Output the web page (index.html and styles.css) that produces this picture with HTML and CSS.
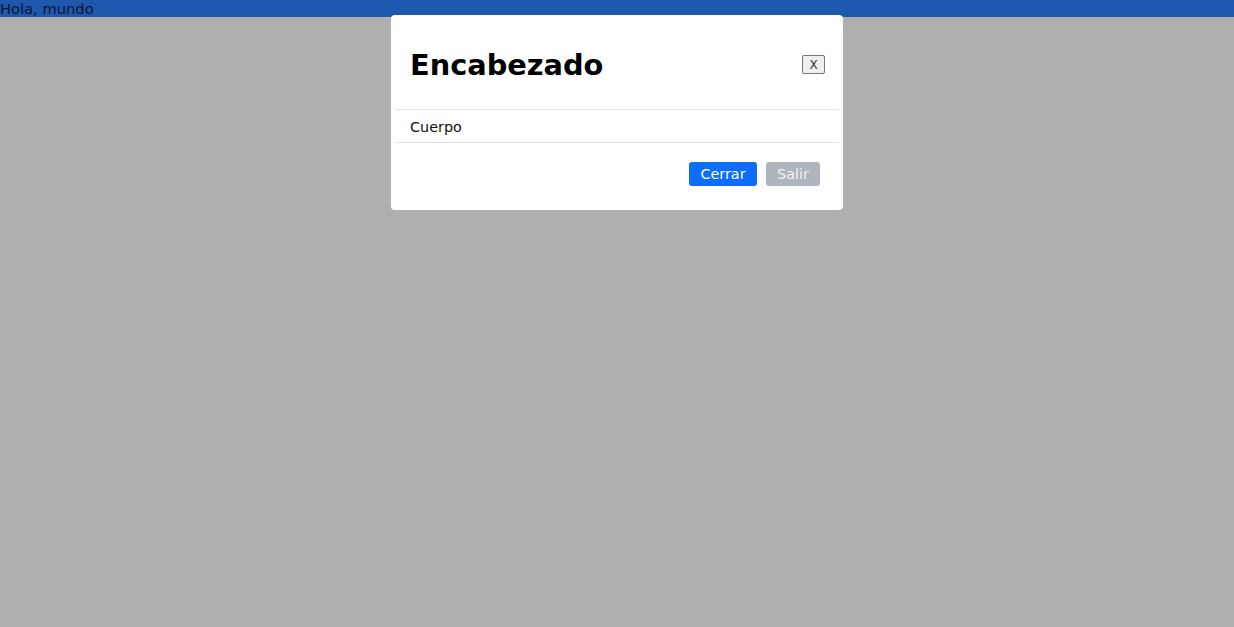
FILE: index.html
```html
<!DOCTYPE html>
<html lang="es">
<head>
<meta charset="utf-8">
<title>Modal</title>
<link rel="stylesheet" href="styles.css">
</head>
<body>
<div class="topbar">Hola, mundo</div>
<div class="overlay"></div>
<div class="modal">
  <div class="modal-header">
    <h1 class="modal-title">Encabezado</h1>
    <button class="close-btn" type="button">X</button>
  </div>
  <div class="modal-body">Cuerpo</div>
  <div class="modal-footer">
    <button class="btn btn-primary" type="button">Cerrar</button>
    <button class="btn btn-secondary" type="button">Salir</button>
  </div>
</div>
</body>
</html>
```
FILE: styles.css
```css
html, body {
  margin: 0;
  padding: 0;
  height: 100%;
}
body {
  background: #ffffff;
  font-family: "DejaVu Sans", Verdana, sans-serif;
  font-size: 14.4px;
}
.topbar {
  background: #2d81ff;
  color: #0a1f4a;
  height: 17px;
  line-height: 18px;
  font-size: 14.7px;
}
.overlay {
  position: fixed;
  inset: 0;
  background: rgba(0, 0, 0, 0.314);
}
.modal {
  position: absolute;
  top: 15px;
  left: 391px;
  width: 452px;
  background: #fff;
  border-radius: 4px;
  padding: 0 4px;
  box-sizing: border-box;
}
.modal-header {
  height: 95px;
  display: flex;
  align-items: center;
  justify-content: space-between;
  border-bottom: 1px solid #e3e3e3;
  padding: 5px 14px 0 15px;
  box-sizing: border-box;
}
.modal-title {
  margin: 0;
  font-size: 28.8px;
  font-weight: bold;
  color: #000;
  line-height: 1;
  padding-top: 2px;
}
.close-btn {
  width: 23px;
  height: 19px;
  padding: 0;
  font-family: "DejaVu Sans", sans-serif;
  font-size: 12px;
  color: #333;
  background: #efefef;
  border: 1px solid #767676;
  border-radius: 2px;
  line-height: 1;
}
.modal-body {
  height: 33px;
  line-height: 34px;
  padding: 0 15px;
  color: #111;
  border-bottom: 1px solid #e3e3e3;
  box-sizing: border-box;
}
.modal-footer {
  display: flex;
  justify-content: flex-end;
  gap: 9px;
  padding: 19px 19px 24px 0;
}
.btn {
  height: 24px;
  border: none;
  border-radius: 3px;
  color: #fff;
  font-family: "DejaVu Sans", sans-serif;
  font-size: 14.4px;
  padding: 0;
  line-height: 25px;
}
.btn-primary {
  width: 68px;
  background: #0d6efd;
}
.btn-secondary {
  width: 54px;
  background: #aeb5bd;
  color: #f1f3f5;
}
```
